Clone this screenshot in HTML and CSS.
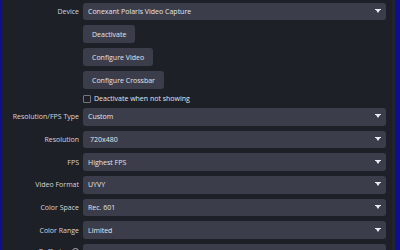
FILE: index.html
```html
<!DOCTYPE html>
<html lang="en">
<head>
    <meta charset="UTF-8">
    <title>Video Capture Device Properties</title>
    <link rel="stylesheet" href="styles.css">
</head>
<body>
    <div class="frame">
        <div class="edge edge-left"></div>

        <div class="panel">
            <div class="props">
                <!-- Device -->
                <div class="label">Device</div>
                <div class="combo combo-first">
                    <span>Conexant Polaris Video Capture</span>
                    <span class="arrow"></span>
                </div>

                <div></div>
                <div class="cell"><button class="btn">Deactivate</button></div>

                <div></div>
                <div class="cell"><button class="btn">Configure Video</button></div>

                <div></div>
                <div class="cell"><button class="btn">Configure Crossbar</button></div>

                <div></div>
                <label class="check">
                    <span class="box"></span>
                    <span>Deactivate when not showing</span>
                </label>

                <!-- Format settings -->
                <div class="label">Resolution/FPS Type</div>
                <div class="combo"><span>Custom</span><span class="arrow"></span></div>

                <div class="label">Resolution</div>
                <div class="combo"><span class="editable">720x480</span><span class="arrow"></span></div>

                <div class="label">FPS</div>
                <div class="combo"><span>Highest FPS</span><span class="arrow"></span></div>

                <div class="label">Video Format</div>
                <div class="combo"><span>UYVY</span><span class="arrow"></span></div>

                <div class="label">Color Space</div>
                <div class="combo"><span>Rec. 601</span><span class="arrow"></span></div>

                <div class="label">Color Range</div>
                <div class="combo"><span>Limited</span><span class="arrow"></span></div>

                <div class="label label-help">
                    Buffering
                    <svg class="help" width="7" height="7" viewBox="0 0 14 14">
                        <circle cx="7" cy="7" r="6" fill="none" stroke="#d4d6dc" stroke-width="1.6"/>
                        <circle cx="7" cy="10" r="1" fill="#d4d6dc"/>
                    </svg>
                </div>
                <div class="combo"><span>Auto-Detect</span><span class="arrow"></span></div>
            </div>
        </div>

        <div class="track"></div>
        <div class="edge edge-right"></div>
    </div>
</body>
</html>
```

FILE: styles.css
```css
html, body {
    margin: 0;
    padding: 0;
    height: 250px;
    overflow: hidden;
}

body {
    font-family: 'Open Sans', sans-serif;
    font-size: 7px;
    background: #1e2027;
    color: #d4d6dc;
}

.frame {
    display: flex;
    height: 250px;
}

.edge {
    background: #0e0e94;
}

.edge-left {
    width: 2px;
}

.edge-right {
    width: 4px;
    margin-left: 1px;
}

.track {
    width: 3px;
    margin-left: 6px;
    background: #23252d;
}

.panel {
    flex: 1;
    padding: 3px 0 0 0;
}

.props {
    display: grid;
    grid-template-columns: 77px 1fr;
    grid-template-rows: 17px 18px 18px 18px 9px repeat(7, 17.67px);
    column-gap: 4px;
    row-gap: 5px;
}

.label {
    display: flex;
    align-items: center;
    justify-content: flex-end;
    color: #d4d6dc;
    white-space: nowrap;
}

.label-help {
    gap: 3px;
    align-items: flex-start;
    padding-top: 3px;
}

.help {
    margin-top: 1px;
}

.combo {
    display: flex;
    align-items: center;
    justify-content: space-between;
    background: #3b3e4a;
    border-radius: 3px;
    padding: 0 4px 0 5px;
    color: #e4e5ea;
}

.combo .editable {
    padding-left: 2px;
}

.arrow {
    width: 0;
    height: 0;
    border-left: 2.5px solid transparent;
    border-right: 2.5px solid transparent;
    border-top: 3px solid #eceef2;
    margin-right: 2px;
    position: relative;
}

.arrow::before {
    content: '';
    position: absolute;
    left: -3px;
    top: -4px;
    width: 6px;
    height: 1px;
    background: #eceef2;
}

.cell {
    display: flex;
}

.btn {
    font-family: 'Open Sans', sans-serif;
    font-size: 7px;
    color: #e4e5ea;
    background: #3b3e4a;
    border: none;
    border-radius: 3px;
    padding: 0 9px;
    height: 18px;
}

.check {
    display: flex;
    align-items: center;
    gap: 3px;
    color: #e4e5ea;
}

.check .box {
    width: 6px;
    height: 6px;
    border: 1px solid #737680;
    border-radius: 1px;
    background: #1e2027;
}
```
